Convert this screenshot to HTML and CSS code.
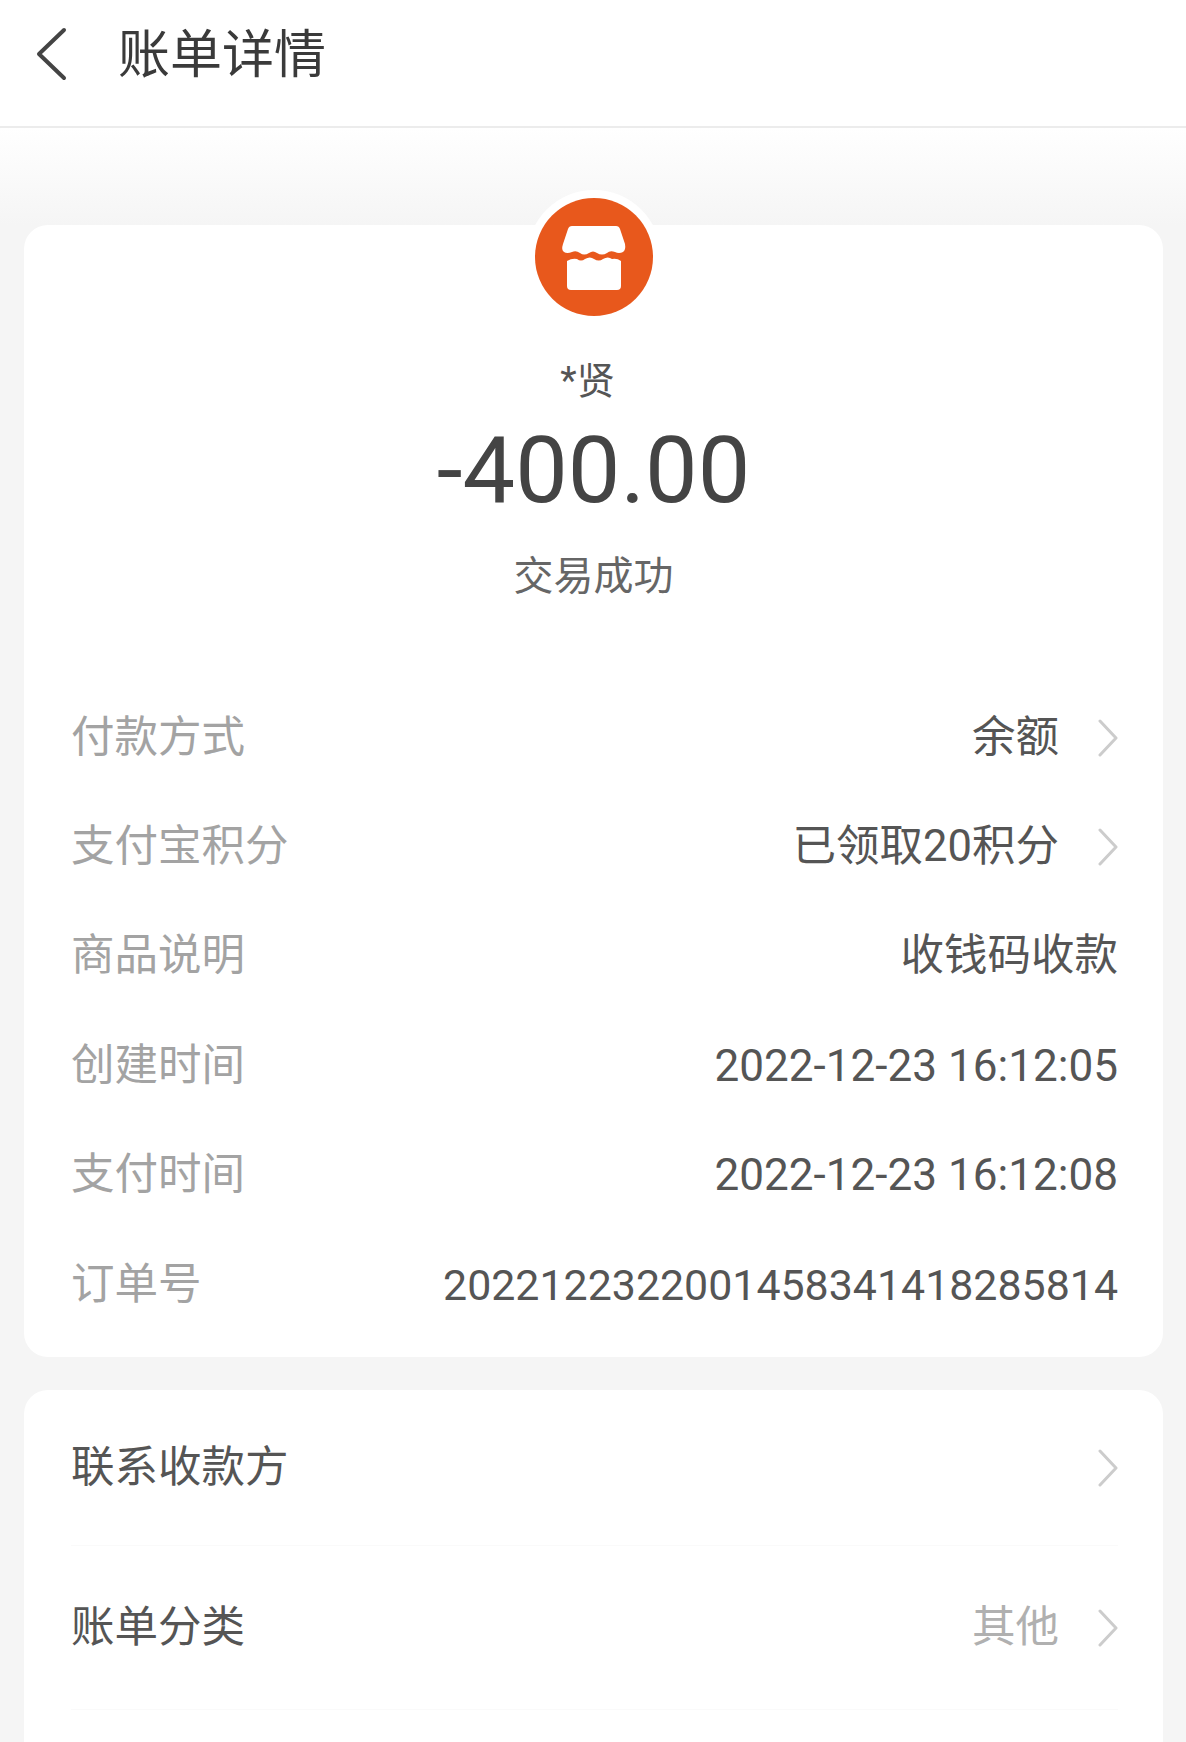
FILE: index.html
```html
<!DOCTYPE html>
<html lang="zh-CN">
<head>
    <meta charset="UTF-8">
    <meta name="viewport" content="width=device-width, initial-scale=1.0">
    <title>账单详情</title>
    <link rel="stylesheet" href="styles.css">
</head>
<body>
    <div class="page">
        <header class="top-bar">
            <svg class="back-icon" width="32" height="54" viewBox="0 0 32 54">
                <path d="M29 3 L4 27 L29 51" fill="none" stroke="#444" stroke-width="4" stroke-linecap="round" stroke-linejoin="round"/>
            </svg>
            <h1 class="page-title">账单详情</h1>
        </header>

        <main class="content">
            <section class="card summary-card">
                <div class="shop-badge">
                    <svg width="118" height="118" viewBox="0 0 118 118">
                        <circle cx="59" cy="59" r="59" fill="#e8581c"/>
                        <path d="M37 28 H81 Q84 28 85 31 L90 46 Q91 52 88 54 Q84 56 80 54 Q75 52 72 55 Q67 58 62 55 Q58 52 54 55 Q49 58 45 55 Q41 52 37 54 Q32 56 29 54 Q26 52 28 46 L33 31 Q34 28 37 28 Z" fill="#fff"/>
                        <path d="M32 63 Q37 60 42 61 Q46 64 50 61 Q55 58 59 61 Q64 64 68 61 Q73 58 77 61 Q82 60 86 63 V88 Q86 92 82 92 H36 Q32 92 32 88 Z" fill="#fff"/>
                    </svg>
                </div>
                <div class="payee">*贤</div>
                <div class="amount">-400.00</div>
                <div class="status">交易成功</div>

                <ul class="detail-list">
                    <li class="detail-row">
                        <span class="detail-label">付款方式</span>
                        <span class="detail-value has-arrow">余额
                            <svg class="arrow" width="20" height="38" viewBox="0 0 20 38"><path d="M2 2 L18 19 L2 36" /></svg>
                        </span>
                    </li>
                    <li class="detail-row">
                        <span class="detail-label">支付宝积分</span>
                        <span class="detail-value has-arrow">已领取20积分
                            <svg class="arrow" width="20" height="38" viewBox="0 0 20 38"><path d="M2 2 L18 19 L2 36" /></svg>
                        </span>
                    </li>
                    <li class="detail-row">
                        <span class="detail-label">商品说明</span>
                        <span class="detail-value">收钱码收款</span>
                    </li>
                    <li class="detail-row">
                        <span class="detail-label">创建时间</span>
                        <span class="detail-value date-value">2022-12-23 16:12:05</span>
                    </li>
                    <li class="detail-row">
                        <span class="detail-label">支付时间</span>
                        <span class="detail-value date-value">2022-12-23 16:12:08</span>
                    </li>
                    <li class="detail-row">
                        <span class="detail-label">订单号</span>
                        <span class="detail-value order-value">2022122322001458341418285814</span>
                    </li>
                </ul>
            </section>

            <section class="card action-card">
                <div class="action-row">
                    <span class="action-label">联系收款方</span>
                    <svg class="arrow" width="20" height="38" viewBox="0 0 20 38"><path d="M2 2 L18 19 L2 36" /></svg>
                </div>
                <div class="action-row">
                    <span class="action-label">账单分类</span>
                    <span class="detail-value has-arrow muted">其他
                        <svg class="arrow" width="20" height="38" viewBox="0 0 20 38"><path d="M2 2 L18 19 L2 36" /></svg>
                    </span>
                </div>
            </section>
        </main>
    </div>
</body>
</html>
```

FILE: styles.css
```css
* {
    margin: 0;
    padding: 0;
    box-sizing: border-box;
}

body {
    background: #f5f5f5;
    color: #444;
    font-family: 'Roboto', 'Noto Sans CJK SC', sans-serif;
    overflow: hidden;
}

.page {
    display: flex;
    flex-direction: column;
    height: 100vh;
}

.top-bar {
    display: flex;
    align-items: center;
    gap: 51px;
    height: 128px;
    padding: 0 0 14px 35px;
    background: #fff;
    border-bottom: 2px solid #ececec;
}

.back-icon {
    margin-bottom: 4px;
}

.page-title {
    font-size: 52px;
    font-weight: 400;
    line-height: 60px;
    color: #3a3a3a;
}

.content {
    flex: 1;
    display: flex;
    flex-direction: column;
    gap: 33px;
    padding: 97px 23px 0 24px;
    background: linear-gradient(#fff, #f5f5f5 97px);
}

.card {
    background: #fff;
    border-radius: 24px;
}

.summary-card {
    display: flex;
    flex-direction: column;
    align-items: center;
    height: 1132px;
}

.shop-badge {
    display: flex;
    margin-top: -35px;
    padding: 8px;
    background: #fff;
    border-radius: 50%;
}

.payee {
    margin-top: 32px;
    font-size: 38px;
    line-height: 50px;
    color: #555;
    transform: translateX(-6px);
}

.amount {
    margin-top: 9px;
    font-size: 93.6px;
    line-height: 110px;
    color: #444;
}

.status {
    margin-top: 25px;
    font-size: 40px;
    line-height: 54px;
    color: #666;
}

.detail-list {
    align-self: stretch;
    list-style: none;
    margin-top: 79px;
    padding: 0 45px 0 47px;
}

.detail-row {
    display: flex;
    justify-content: space-between;
    align-items: center;
    height: 109.4px;
    font-size: 43.5px;
    line-height: 60px;
}

.detail-label {
    color: #a3a3a3;
}

.detail-value {
    display: flex;
    align-items: center;
    color: #555;
}

.date-value {
    font-size: 44.1px;
}

.order-value {
    font-size: 42.9px;
}

.has-arrow {
    gap: 39px;
}

.muted {
    color: #b0b0b0;
}

.arrow {
    flex: none;
}

.arrow path {
    fill: none;
    stroke: #ccc;
    stroke-width: 3;
    stroke-linecap: round;
    stroke-linejoin: round;
}

.action-card {
    flex: 1;
    border-radius: 24px 24px 0 0;
    padding: 0 45px 0 47px;
}

.action-row {
    display: flex;
    justify-content: space-between;
    align-items: center;
    height: 155px;
    font-size: 43.5px;
    line-height: 60px;
    color: #555;
}

.action-row + .action-row {
    height: 165px;
    border-top: 1px solid #fafafa;
    border-bottom: 1px solid #fafafa;
}
```
